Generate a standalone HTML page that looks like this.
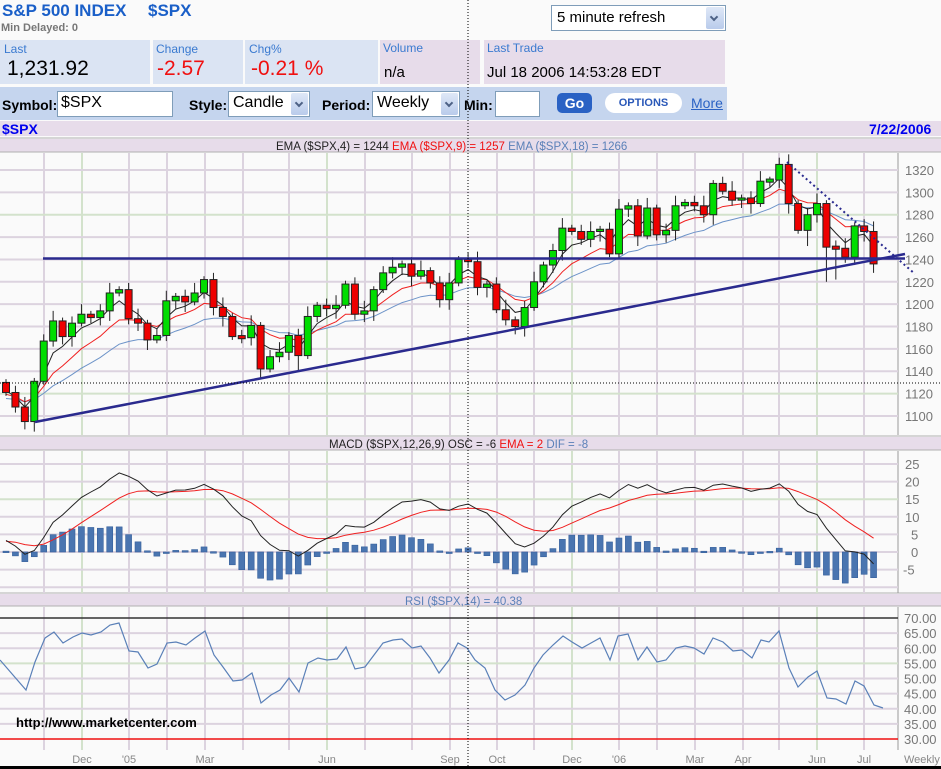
<!DOCTYPE html>
<html><head><meta charset="utf-8">
<style>
*{margin:0;padding:0;box-sizing:border-box}
body{width:941px;height:769px;background:#fafafa;font-family:"Liberation Sans",Arial,sans-serif;position:relative;overflow:hidden}
.a{position:absolute;white-space:nowrap}
.lab{font-size:12px;color:#3a7ad0}
.val{font-size:21px}
.sel{position:absolute;background:#fff;border:1px solid #7f9db9}
.arr{position:absolute;right:1px;top:1px;bottom:1px;width:17px;background:linear-gradient(#dfe8f7,#b9cbeb);border-radius:2px}
.arr:after{content:"";position:absolute;left:5px;top:7px;width:4px;height:4px;border-right:2px solid #4d6185;border-bottom:2px solid #4d6185;transform:rotate(45deg)}
</style></head><body>
<div class="a" style="left:2px;top:1px;font-size:17px;font-weight:bold;color:#1a5fc8">S&amp;P 500 INDEX</div>
<div class="a" style="left:148px;top:1px;font-size:17px;font-weight:bold;color:#1a5fc8">$SPX</div>
<div class="a" style="left:1px;top:22px;font-size:11px;font-weight:bold;color:#777">Min Delayed: 0</div>
<div class="sel" style="left:551px;top:5px;width:175px;height:26px"><span class="a" style="left:5px;top:3px;font-size:15px">5 minute refresh</span><div class="arr" style="width:18px"></div></div>

<div class="a" style="left:0;top:40px;width:150px;height:44px;background:#dbe4f3"></div>
<div class="a" style="left:153px;top:40px;width:90px;height:44px;background:#dbe4f3"></div>
<div class="a" style="left:245px;top:40px;width:133px;height:44px;background:#dbe4f3"></div>
<div class="a" style="left:380px;top:40px;width:100px;height:44px;background:#e7dcea"></div>
<div class="a" style="left:484px;top:40px;width:241px;height:44px;background:#e7dcea"></div>
<div class="a lab" style="left:4px;top:42px">Last</div>
<div class="a val" style="left:7px;top:57px">1,231.92</div>
<div class="a lab" style="left:156px;top:42px">Change</div>
<div class="a val" style="left:157px;top:57px;color:#f01010">-2.57</div>
<div class="a lab" style="left:249px;top:42px">Chg%</div>
<div class="a val" style="left:251px;top:57px;color:#f01010">-0.21 %</div>
<div class="a lab" style="left:383px;top:41px">Volume</div>
<div class="a" style="left:384px;top:64px;font-size:15px">n/a</div>
<div class="a lab" style="left:487px;top:41px">Last Trade</div>
<div class="a" style="left:487px;top:64px;font-size:15px">Jul 18 2006 14:53:28 EDT</div>

<div class="a" style="left:0;top:87px;width:727px;height:33px;background:#c5d5ee"></div>
<div class="a" style="left:2px;top:97px;font-size:14px;font-weight:bold">Symbol:</div>
<div class="sel" style="left:57px;top:91px;width:116px;height:26px"><span class="a" style="left:3px;top:2px;font-size:16px">$SPX</span></div>
<div class="a" style="left:189px;top:97px;font-size:14px;font-weight:bold">Style:</div>
<div class="sel" style="left:228px;top:91px;width:82px;height:26px"><span class="a" style="left:4px;top:2px;font-size:16px">Candle</span><div class="arr"></div></div>
<div class="a" style="left:322px;top:97px;font-size:14px;font-weight:bold">Period:</div>
<div class="sel" style="left:372px;top:91px;width:88px;height:26px"><span class="a" style="left:4px;top:2px;font-size:16px">Weekly</span><div class="arr"></div></div>
<div class="a" style="left:464px;top:97px;font-size:14px;font-weight:bold">Min:</div>
<div class="sel" style="left:495px;top:91px;width:45px;height:26px"></div>
<div class="a" style="left:557px;top:93px;width:35px;height:20px;background:#2a62c4;border-radius:5px;color:#fff;font-weight:bold;font-size:14px;text-align:center;line-height:20px">Go</div>
<div class="a" style="left:605px;top:93px;width:77px;height:20px;background:#fff;border-radius:10px;color:#2a58b8;font-weight:bold;font-size:11px;text-align:center;line-height:20px">OPTIONS</div>
<div class="a" style="left:691px;top:95px;font-size:14px;color:#2a62c4;text-decoration:underline">More</div>

<div class="a" style="left:0;top:121px;width:941px;height:15px;background:#e7dcea"></div>
<div class="a" style="left:2px;top:121px;font-size:14px;font-weight:bold;color:#0000ee">$SPX</div>
<div class="a" style="left:869px;top:121px;font-size:14px;font-weight:bold;color:#0000ee">7/22/2006</div>

<svg id="s" class="a" style="left:0;top:0" width="941" height="769" xmlns="http://www.w3.org/2000/svg" font-family="Liberation Sans, Arial, sans-serif"></svg>
<script>
var C=[1121,1108,1095,1131,1167,1185,1171,1183,1191,1188,1194,1210,1213,1187,1183,1168,1172,1203,1207,1202,1210,1222,1197,1189,1171,1170,1181,1142,1153,1157,1172,1154,1189,1199,1196,1199,1218,1191,1194,1213,1228,1233,1236,1225,1230,1219,1204,1219,1240,
1238,1215,1218,1195,1186,1180,1197,1220,1235,1248,1268,1265,1258,1265,1267,1245,1285,1288,1261,1286,1262,1266,1288,1291,1288,1280,1308,1301,1293,1295,1290,1310,1311,1325,1290,1266,1280,1290,1251,1250,1242,1270,1265,1236];
var h='';
function X(i){return 6+i*9.43}
function PY(p){return 170+(1320-p)*1.118}
var VX=[44,82,129,167,205,243,289,327,365,412,450,497,534,572,619,657,695,743,779,817,864];
var GR={82:1,327:1,572:1,817:1};
function bar(y1,y2){h+='<rect x="0" y="'+y1+'" width="941" height="'+(y2-y1)+'" fill="#e7dcea"/><line x1="0" x2="941" y1="'+(y1-1)+'" y2="'+(y1-1)+'" stroke="#b0b0b0"/><line x1="0" x2="941" y1="'+y2+'" y2="'+y2+'" stroke="#b0b0b0"/>';}
bar(139,152);bar(437,450);bar(594,606);
function vgrid(t,b){VX.forEach(function(x){h+='<line x1="'+x+'" x2="'+x+'" y1="'+t+'" y2="'+b+'" stroke="'+(GR[x]?'#d3e2cc':'#dcd3df')+'" stroke-width="2"/>';});
h+='<line x1="898" x2="898" y1="'+t+'" y2="'+b+'" stroke="#999"/>';}
vgrid(153,435);
for(var p=1320;p>=1100;p-=20){var y=PY(p);h+='<line x1="0" x2="898" y1="'+y+'" y2="'+y+'" stroke="'+((p==1280||p==1120)?'#d3e2cc':'#dcd3df')+'" stroke-width="2"/><text x="905" y="'+(y+5)+'" font-size="13" fill="#777">'+p+'</text>';}
function ema(n,seed){var k=2/(n+1),e=seed,o=[];C.forEach(function(c){e=c*k+e*(1-k);o.push(e)});return o}
function line(arr,f,col,w){var d='';arr.forEach(function(v,i){d+=(i?'L':'M')+X(i).toFixed(1)+' '+f(v).toFixed(1)});h+='<path d="'+d+'" fill="none" stroke="'+col+'" stroke-width="'+(w||1)+'"/>';}
line(ema(18,1115),PY,'#6c93c8');line(ema(9,1119),PY,'#f02020');line(ema(4,1124),PY,'#222');
var LW={87:1220,88:1222,31:1140,85:1252,92:1228};
C.forEach(function(c,i){var o=i?C[i-1]:1130;var x=X(i);var hi=Math.max(o,c)+3+(i%3)*3,lo=Math.min(o,c)-3-(i%4)*2;if(LW[i])lo=LW[i];
h+='<line x1="'+x+'" x2="'+x+'" y1="'+PY(hi)+'" y2="'+PY(lo)+'" stroke="#222"/>';
var t=PY(Math.max(o,c)),b=PY(Math.min(o,c));if(b-t<2){t-=1;b+=1}
h+='<rect x="'+(x-3.5)+'" y="'+t+'" width="7" height="'+(b-t)+'" fill="'+(c>=o?'#00dd00':'#ee0000')+'" stroke="#222"/>';});
h+='<line x1="43" x2="905" y1="258.5" y2="258.5" stroke="#2a2a8e" stroke-width="2.5"/>';
h+='<line x1="35" x2="905" y1="422" y2="254" stroke="#2a2a8e" stroke-width="2.5"/>';
h+='<line x1="787" x2="915" y1="162" y2="274" stroke="#2a2a8e" stroke-width="2" stroke-dasharray="2,3"/>';
h+='<line x1="0" x2="941" y1="383" y2="383" stroke="#000" stroke-dasharray="1,2"/>';
vgrid(451,593);
var MY=function(v){return 552-v*3.52};
[25,20,15,10,5,0,-5,-10].forEach(function(v){var y=MY(v);h+='<line x1="0" x2="898" y1="'+y+'" y2="'+y+'" stroke="'+(v==15?'#d3e2cc':'#dcd3df')+'" stroke-width="2"/>';if(v>-10)h+='<text x="'+(v<0?903:(v>=10?905:911))+'" y="'+(y+5)+'" font-size="13" fill="#777">'+v+'</text>';});
var e12=ema(12,1126),e26=ema(26,1122),m=e12.map(function(v,i){return v-e26[i]});var k=0.2,s=3,sg=[];m.forEach(function(v){s=v*k+s*(1-k);sg.push(s)});
m.forEach(function(v,i){var d=v-sg[i];var y=MY(d);h+='<rect x="'+(X(i)-3)+'" y="'+Math.min(y,552)+'" width="6" height="'+Math.max(Math.abs(y-552),1.5)+'" fill="#4a75b0" stroke="#36609c" stroke-width="0.6"/>';});
line(sg,MY,'#f02020');line(m,MY,'#222');
vgrid(607,750);
var RY=function(v){return 618+(70-v)*3.025};
for(var v=70;v>=30;v-=5){var y=RY(v);h+='<line x1="0" x2="898" y1="'+y+'" y2="'+y+'" stroke="'+(v==70?'#333':v==30?'#f01010':v==55?'#d3e2cc':'#dcd3df')+'" stroke-width="'+(v==70||v==30?1.5:2)+'"/><text x="904" y="'+(y+5)+'" font-size="13" fill="#777">'+v+'.00</text>';}
var R=[[0,660],[26,690],[35,662],[45,638],[54,632],[63,643],[73,637],[82,633],[91,635],[101,632],[110,625],[119,623],[129,651],[138,652],[148,668],[157,664],[167,643],[176,642],[186,645],[195,638],[205,631],[214,655],[223,667],[233,681],[242,680],[252,673],[261,703],[271,695],[280,690],[289,678],[299,692],[308,663],[318,658],[327,660],[337,659],[346,647],[355,669],[365,667],[374,655],[383,643],[393,640],[402,639],[412,648],[421,646],[430,658],[439,673],[449,660],[458,643],[467,648],[475,660],[485,668],[495,690],[505,700],[515,695],[525,685],[534,668],[543,655],[553,645],[563,636],[572,642],[582,648],[591,643],[600,638],[610,660],[618,636],[628,634],[638,660],[647,647],[657,662],[666,660],[676,648],[685,646],[694,648],[704,654],[713,638],[723,642],[733,651],[742,650],[752,658],[761,640],[769,642],[779,631],[789,668],[798,687],[808,677],[817,671],[827,698],[836,699],[846,704],[855,681],[864,686],[874,705],[883,708]];
h+='<path d="M'+R.map(function(p){return p[0]+' '+p[1]}).join('L')+'" fill="none" stroke="#5a80b8" stroke-width="1.2"/>';
h+='<text x="16" y="727" font-size="13" font-weight="bold" fill="#000">http://www.marketcenter.com</text>';
h+='<text x="276" y="150" font-size="11.5" fill="#222">EMA ($SPX,4) = 1244 <tspan fill="#f01010">EMA ($SPX,9) = 1257</tspan> <tspan fill="#5a80b8">EMA ($SPX,18) = 1266</tspan></text>';
h+='<text x="329" y="448" font-size="11.5" fill="#222">MACD ($SPX,12,26,9) OSC = -6 <tspan fill="#f01010">EMA = 2</tspan> <tspan fill="#5a80b8">DIF = -8</tspan></text>';
h+='<text x="405" y="605" font-size="11.5" fill="#5a80b8">RSI ($SPX,14) = 40.38</text>';
[['Dec',82],["'05",129],['Mar',205],['Jun',327],['Sep',450],['Oct',497],['Dec',572],["'06",619],['Mar',695],['Apr',743],['Jun',817],['Jul',864]].forEach(function(a){h+='<text x="'+a[1]+'" y="763" font-size="11" fill="#888" text-anchor="middle">'+a[0]+'</text>'});
h+='<text x="904" y="763" font-size="11" fill="#888">Weekly</text>';
h+='<line x1="468" x2="468" y1="0" y2="769" stroke="#000" stroke-dasharray="1,2"/>';
h+='<rect x="0" y="766" width="941" height="3" fill="#000"/>';
document.getElementById('s').innerHTML=h;
</script>
</body></html>
